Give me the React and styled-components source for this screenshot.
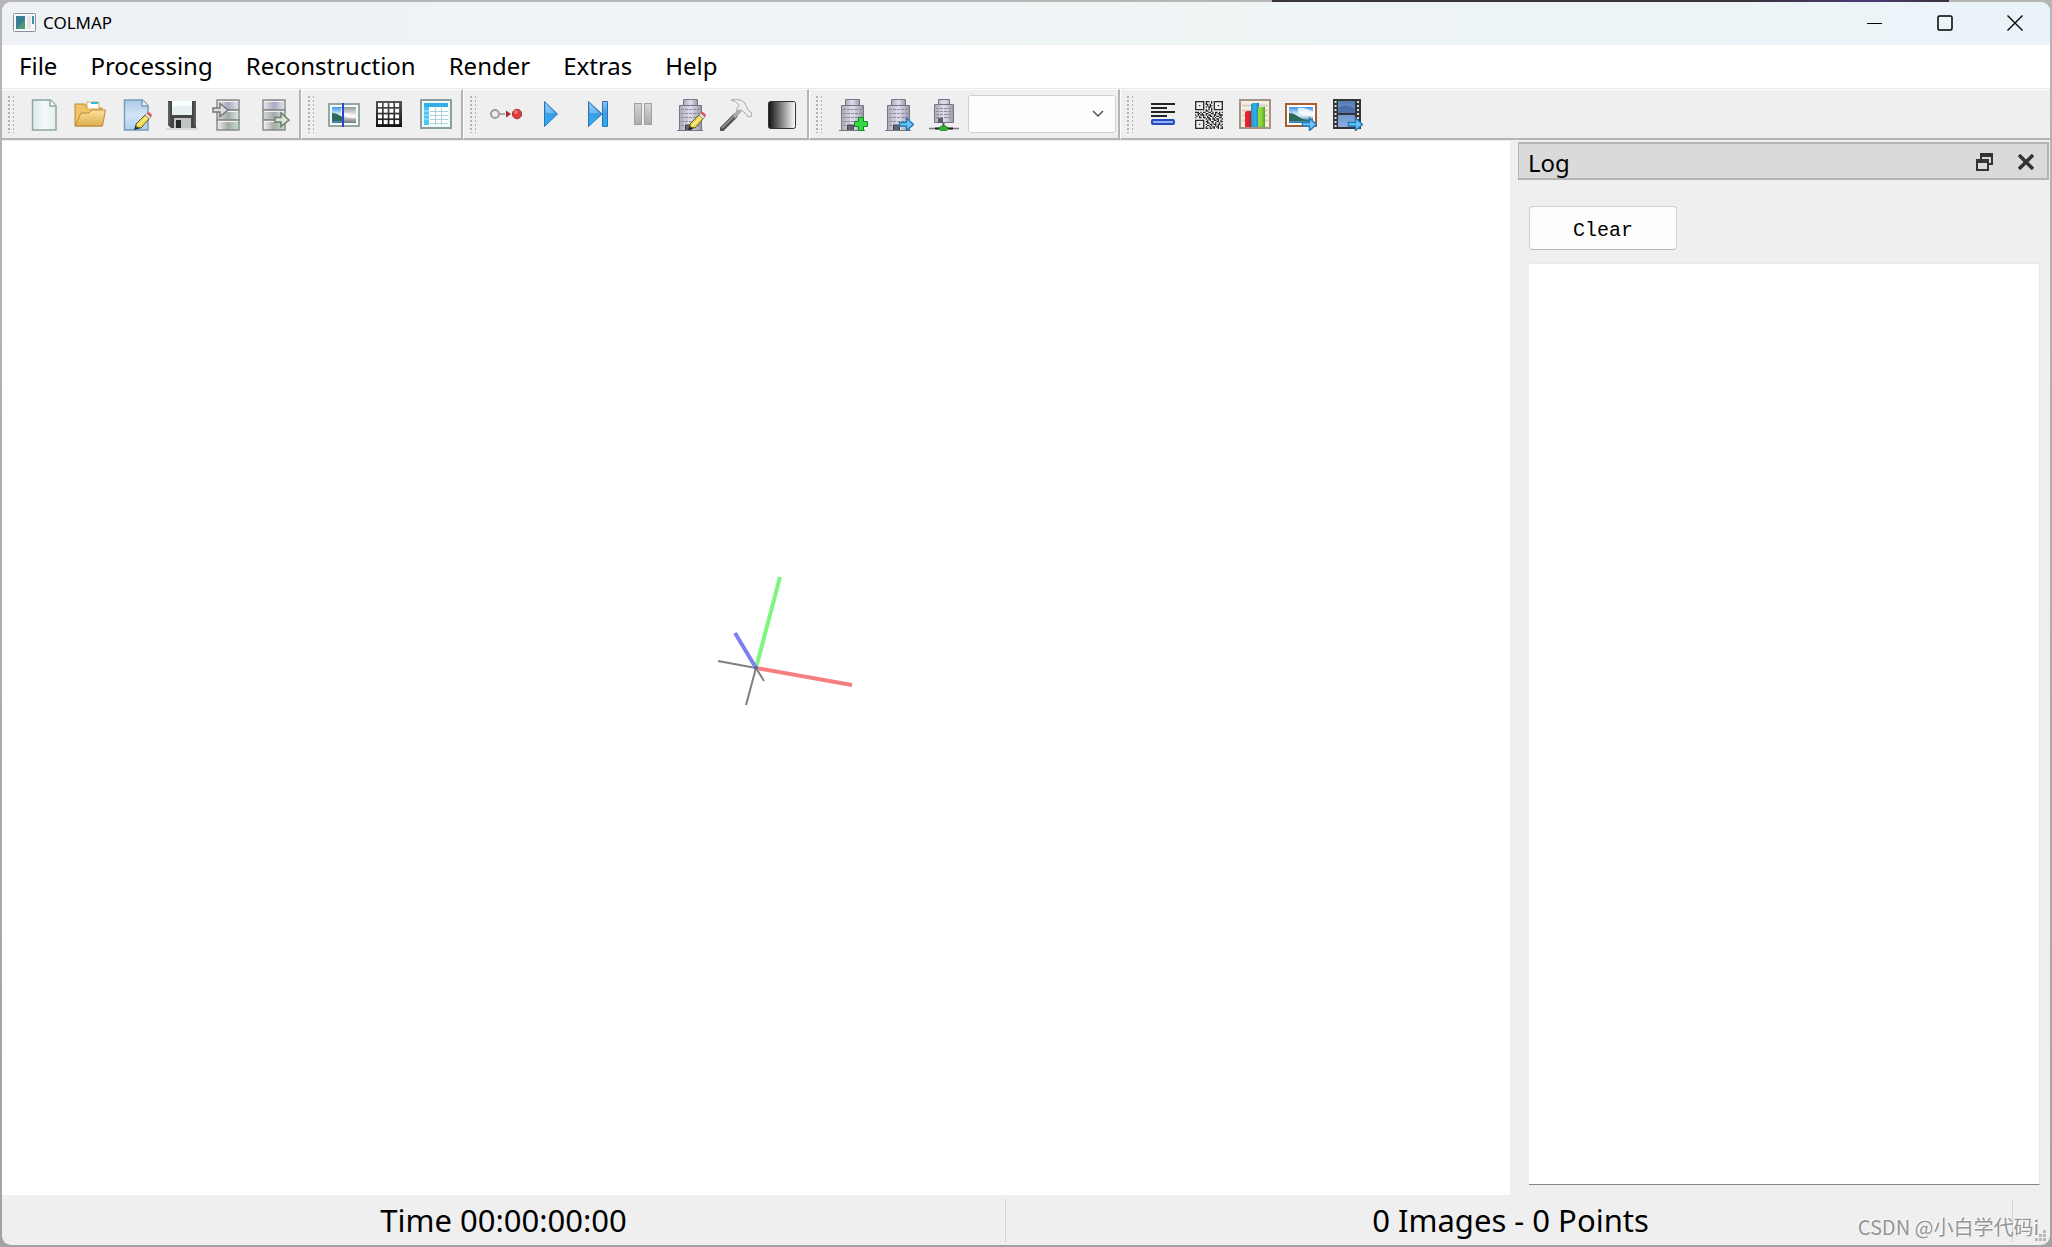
import React from 'react'
import styled, { createGlobalStyle } from 'styled-components'

const line = '#b4b4b4'
const panel = '#efefef'
const uiFont = '"Segoe UI", "Noto Sans", "Open Sans", sans-serif'

const GlobalStyle = createGlobalStyle`
  * {
    box-sizing: border-box;
  }
  body {
    margin: 0;
    background: #c4c4c4;
    color: #000;
    font-family: ${uiFont};
  }
  button, select, textarea {
    font-family: inherit;
    color: inherit;
  }
`

const Desktop = styled.div`
  display: flex;
  flex-direction: column;
  height: 100vh;
  padding: 2px;
  background: linear-gradient(90deg, transparent 62%, #383338 62%, #383338 85%, #4b3a78 91%, #383338 95%, transparent 95%) top / 100% 2px no-repeat,
    linear-gradient(#b6b6b6, #a2a3a3);
`

const Window = styled.div`
  position: relative;
  flex: 1;
  min-height: 0;
  display: flex;
  flex-direction: column;
  border-radius: 9px;
  overflow: hidden;
  background: ${panel};
`

const TitleBar = styled.header`
  display: flex;
  align-items: center;
  height: 43px;
  flex: none;
  padding-left: 11px;
  background: linear-gradient(90deg, #eef2f6, #eff4f5 60%, #eaf4f8);
`

const TitleIcon = styled.svg`
  margin-bottom: 2px;
`

const AppTitle = styled.h1`
  flex: 1;
  margin: 0 0 2px 7px;
  font-size: 17px;
  line-height: 24px;
  font-weight: 400;
`

const CaptionButton = styled.button`
  display: flex;
  align-items: center;
  justify-content: center;
  width: 70px;
  height: 43px;
  padding: 0 0 2px;
  border: 0;
  background: none;
`

const MenuBar = styled.nav`
  display: flex;
  gap: 1px;
  height: 43px;
  flex: none;
  padding-left: 1px;
  background: #fff;
`

const MenuItem = styled.button`
  padding: 0 16px;
  border: 0;
  background: none;
  font-size: 24px;
  line-height: 42px;
  height: 42px;
`

const ToolArea = styled.div`
  display: flex;
  height: 52px;
  flex: none;
  border-top: 1px solid #e8e8e8;
`

const ToolGroup = styled.div`
  display: flex;
  align-items: flex-start;
  flex: ${p => (p.$last ? 1 : 'none')};
  padding: 9px ${p => (p.$last ? 0 : '2px')} 0 6px;
  border-top: 1px solid #fff;
  border-right: ${p => (p.$last ? 0 : '2px')} solid ${line};
  border-bottom: 2px solid ${line};
  & + & {
    border-left: 1px solid #fff;
  }
`

const GripDots = styled.svg`
  flex: none;
  margin: -4px 6px 0 0;
`

const ToolButton = styled.button`
  display: flex;
  justify-content: center;
  width: 46px;
  height: 32px;
  padding: 0;
  border: 0;
  background: none;
`

const Combo = styled.label`
  position: relative;
  margin: -4px 0 0 1px;
  select {
    appearance: none;
    display: block;
    width: 148px;
    height: 38px;
    border: 1px solid #d0d0d0;
    border-radius: 3px;
    background: #fdfdfd;
  }
  svg {
    position: absolute;
    right: 12px;
    top: 15px;
    pointer-events: none;
  }
`

const Workspace = styled.main`
  flex: 1;
  min-height: 0;
  display: flex;
  gap: 8px;
`

const Viewport = styled.div`
  flex: 1;
  display: flex;
  align-items: center;
  justify-content: center;
  margin-top: 1px;
  background: #fff;
`

const Dock = styled.aside`
  flex: 0 0 532px;
  display: flex;
  flex-direction: column;
  padding: 2px 1px 10px 0;
`

const DockTitle = styled.div`
  display: flex;
  align-items: center;
  height: 38px;
  flex: none;
  padding: 2px 5px 0 9px;
  border: 2px solid ${line};
  border-left-width: 1px;
  background: #dadada;
  h2 {
    flex: 1;
    margin: 2px 0 0;
    font-size: 24px;
    line-height: 32px;
    font-weight: 400;
  }
`

const DockButton = styled.button`
  display: flex;
  align-items: center;
  justify-content: center;
  width: 32px;
  height: 32px;
  margin-left: 10px;
  padding: 0;
  border: 0;
  background: none;
`

const DockBody = styled.div`
  flex: 1;
  min-height: 0;
  display: flex;
  flex-direction: column;
  align-items: flex-start;
  gap: 13px;
  padding: 26px 9px 0 11px;
`

const ClearButton = styled.button`
  width: 148px;
  height: 44px;
  padding: 4px 0 0;
  border: 1px solid #d0d0d0;
  border-bottom-color: #b8b8b8;
  border-radius: 4px;
  background: #fdfdfd;
  && {
    font-family: NSimSun, "Liberation Mono", monospace;
  }
  font-size: 20px;
`

const LogText = styled.textarea`
  flex: 1;
  width: 100%;
  resize: none;
  border: 1px solid #e9e9e9;
  border-left: 0;
  border-bottom: 1px solid #868686;
  border-radius: 0;
  background: #fff;
  outline: none;
`

const StatusBar = styled.footer`
  display: flex;
  gap: 3px;
  flex: none;
  height: 50px;
  padding: 4px 0 3px;
`

const StatusCell = styled.div`
  flex: 1;
  border-right: 1px solid #d4d4d4;
  text-align: center;
  font-size: 31px;
  line-height: 43px;
`

const GripCorner = styled.div`
  display: flex;
  align-items: flex-end;
  width: 34px;
  padding-left: 19px;
`

const Watermark = styled.div`
  position: absolute;
  right: 11px;
  bottom: 4px;
  font-family: "Noto Sans CJK SC", sans-serif;
  font-size: 20px;
  line-height: 28px;
  color: #959595;
  text-shadow: -1px -1px 0 #fff;
`

const HiddenDefs = styled.svg`
  position: absolute;
`

const Icon = ({ children }) => (
  <svg width="32" height="32" viewBox="0 0 32 32" aria-hidden="true">{children}</svg>
)

const Gradient = ({ id, from, to, mid, flat }) => (
  <linearGradient id={id} x1="0" y1="0" x2={flat ? 1 : 0} y2={flat ? 0 : 1}>
    <stop offset="0" stopColor={from} />
    {mid && <stop offset=".5" stopColor={mid} />}
    <stop offset="1" stopColor={to} />
  </linearGradient>
)

const Defs = () => (
  <HiddenDefs width="0" height="0" aria-hidden="true">
    <defs>
      <Gradient id="paper" from="#d9e8e7" mid="#f4fafa" to="#e2efed" flat />
      <Gradient id="bluePaper" from="#a9c9e8" mid="#d3e6f7" to="#a8cdf0" />
      <Gradient id="folder" from="#fbe2a0" to="#e0ac4c" />
      <Gradient id="blue" from="#8cc8f4" mid="#3d9de0" to="#22b4fa" />
      <Gradient id="metalTop" from="#e8e8e8" mid="#a9a9c4" to="#e4e4ee" flat />
      <Gradient id="metalMid" from="#d9d9d9" mid="#a2abab" to="#dfe6e6" flat />
      <Gradient id="metalLow" from="#f2f2f2" mid="#a4aca4" to="#c4e0c6" flat />
      <Gradient id="silver" from="#d6d6d6" to="#aaa" />
      <Gradient id="ramp" from="#111" to="#fff" flat />
      <Gradient id="photo" from="#3d94ee" mid="#e8f5fb" to="#2d72a5" />
      <Gradient id="grayPhoto" from="#999" mid="#eee" to="#777" />
      <Gradient id="dark" from="#555" to="#111" />
      <Gradient id="film" from="#557cb8" to="#8daee2" />
      <Gradient id="tower" from="#aaa9b8" mid="#dfdfed" to="#9897a8" flat />
      <Gradient id="barRed" from="#f4222f" mid="#e02331" to="#a3141f" flat />
      <Gradient id="barBlue" from="#2b8fc4" mid="#35b0e6" to="#1a82b5" flat />
      <Gradient id="barGreen" from="#8fe03a" mid="#86d53a" to="#579f23" flat />
    </defs>
  </HiddenDefs>
)

const Pencil = () => (
  <g>
    <path d="M14 31l2-6 5 4z" fill="#222" />
    <path d="M16 25l9-9 4 4-8 9-5-1z" fill="#edd650" stroke="#665b20" />
    <path d="M18 27l9-9" stroke="#fff197" strokeWidth="1.5" />
    <path d="M25 16l2-2 4 4-2 2z" fill="#ddd" stroke="#888" strokeWidth=".7" />
    <path d="M27 14l2-1 3 3-1 2z" fill="#e9434c" />
  </g>
)

const BlueArrow = () => (
  <path d="M17.500 23.500h7v-4.500l7 6.500-7 6v-4.500h-7z" fill="#68c5fa" stroke="#2379b8" strokeWidth="1.400" />
)

const Building = () => (
  <g>
    <path d="M3 31.500h26" stroke="#777" strokeWidth="1" />
    <path d="M9.500.500h14v6h-14z" fill="url(#tower)" stroke="#767583" />
    <path d="M5.500 6.500h22v25h-22z" fill="url(#tower)" stroke="#767583" />
    <path d="M7 10.500h19M7 14.500h19M7 18.500h19M7 22.500h19M7 26.500h19" stroke="#8c8b99" strokeWidth="1.200" strokeDasharray="3 1" />
    <path d="M11.500 31v-5h6v5" fill="#656472" stroke="#444" />
  </g>
)

const Database = () => (
  <g stroke="#8a8c8c" strokeWidth="1.500">
    <rect x="5" y="1" width="22" height="10" fill="url(#metalTop)" />
    <rect x="5" y="11" width="22" height="10" fill="url(#metalMid)" />
    <rect x="5" y="21" width="22" height="10" fill="url(#metalLow)" />
    <path d="M6 2.500h20M6 12.500h20M6 22.500h20" stroke="#f2f2f2" strokeWidth="1" />
  </g>
)

const Picture = () => (
  <g>
    <rect x="4" y="8" width="24" height="16" fill="url(#photo)" />
    <path d="M4 14q5 0 10 4t14 2v2H4z" fill="#2c6957" />
    <path d="M13 9q7-1 15 4v4q-8 0-15-3z" fill="#fff" opacity=".8" />
  </g>
)

const qrRows = [
  '#######.###.#.#######',
  '#.....#.#...#.#.....#',
  '#.....#.##.#..#.....#',
  '#..#..#..#.##.#..#..#',
  '#.....#.#.##..#.....#',
  '#.....#...#.#.#.....#',
  '#######.#.#.#.#######',
  '........##..#........',
  '###.#.##..##.#.##.#.#',
  '..##.#..##..##.#.##..',
  '#.#.###.#.##..##..###',
  '.#.#..#..#.##.#.##.#.',
  '#..##.##.##..#.#..##.',
  '........#.##.##.##..#',
  '#######..#.#..##.#.#.',
  '#.....#.##..##..##.##',
  '#.....#..##..#.#..#..',
  '#..#..#.#..##.##.##.#',
  '#.....#..##.#..#.#.#.',
  '#.....#.#..#.##.##..#',
  '#######.##.##.#..#.##',
]

const qrPath = qrRows
  .map((row, y) => [...row].map((c, x) => (c === '#' ? `M${x} ${y}h1v1h-1z` : '')).join(''))
  .join('')

const icons = {
  newProject: (
    <Icon>
      <path d="M4.500 1h18l5.500 5.500V31H4.500z" fill="url(#paper)" stroke="#90a5a5" strokeWidth="1.500" />
      <path d="M22 1v6h6" fill="#f9fdfd" stroke="#90a5a5" strokeWidth="1.500" />
    </Icon>
  ),
  openProject: (
    <Icon>
      <path d="M1 27V5h10l2 4h15v18z" fill="#efc568" stroke="#b98935" />
      <path d="M13 5V3h12v7H13z" fill="#fff" stroke="#d8a956" />
      <path d="M17 4h7" stroke="#2bb9f1" strokeWidth="2" />
      <path d="M1 27l6-13h8l3-3h13.500l-3 16z" fill="url(#folder)" stroke="#bd8d38" />
    </Icon>
  ),
  editProject: (
    <Icon>
      <path d="M4.500 1h18l5.500 5.500V31H4.500z" fill="url(#bluePaper)" stroke="#7b9cb9" strokeWidth="1.500" />
      <path d="M22 1v6h6" fill="#edf7ff" stroke="#7b9cb9" strokeWidth="1.500" />
      <Pencil />
    </Icon>
  ),
  save: (
    <Icon>
      <path d="M0 29h32v2H0z" fill="#d8d8d8" />
      <path d="M2 2h28v27H5l-3-3z" fill="#454545" />
      <path d="M6 2h20v14H6z" fill="#e5f1f1" />
      <path d="M6 2h20v5H6z" fill="#f9ffff" />
      <path d="M8 19h17v10H8z" fill="#bfc3c4" />
      <path d="M10 21h5v8h-5z" fill="#292929" />
      <path d="M3 3v22M29 3v24" stroke="#777" />
    </Icon>
  ),
  importModel: (
    <Icon>
      <Database />
      <path d="M1 9h7V4.500l8 6.500-8 6.500V13H1z" fill="#d9dddd" stroke="#757878" strokeWidth="1.500" />
    </Icon>
  ),
  exportModel: (
    <Icon>
      <Database />
      <path d="M17 18.500h6V14l8 7-8 6.500V23h-6z" fill="#d5e9d4" stroke="#727a72" strokeWidth="1.500" />
    </Icon>
  ),
  featureExtraction: (
    <Icon>
      <rect x="1" y="5" width="30" height="22" fill="#f5fcfa" stroke="#94a6a4" strokeWidth="2" />
      <Picture />
      <path d="M16 8h12v16H16z" fill="url(#grayPhoto)" />
      <path d="M16 14q6 0 12 3v2q-7 1-12-2z" fill="#fff" opacity=".8" />
      <path d="M15 4v24" stroke="#2845cd" strokeWidth="2" />
    </Icon>
  ),
  featureMatching: (
    <Icon>
      <path d="M2 2h26v26H2z" fill="url(#dark)" />
      {[4, 9.700, 15.400, 21.100].map(y =>
        [4, 9.700, 15.400, 21.100].map(x => <rect key={`${x}-${y}`} x={x} y={y} width="4" height="4" fill="#fff" />)
      )}
    </Icon>
  ),
  databaseManagement: (
    <Icon>
      <rect x="1" y="1" width="30" height="28" fill="#eff9f6" stroke="#8ba09c" strokeWidth="2" />
      <path d="M4 4h24v22H4z" fill="#fff" />
      <path d="M4 4h24v4H4z" fill="#31aee8" />
      <path d="M4 8h5v18H4z" fill="#49c7f7" />
      <path d="M10 12.500h18M10 16.500h18M10 20.500h18M10 24.500h18M15.500 9v17M21.500 9v17" stroke="#a9d3d8" />
      <path d="M4 12h5M4 16h5M4 20h5" stroke="#a8edff" />
    </Icon>
  ),
  automatic: (
    <Icon>
      <path d="M10 15h5" stroke="#999" strokeWidth="1.500" />
      <circle cx="5" cy="15" r="4" fill="#eee" stroke="#9d9d9d" strokeWidth="2" />
      <path d="M16 11.500l5 3.500-5 3.500z" fill="#a92a2a" />
      <circle cx="27" cy="15" r="4.700" fill="#dd3e3e" stroke="#a92d2d" />
      <circle cx="26" cy="13" r="2" fill="#f07575" />
    </Icon>
  ),
  start: (
    <Icon>
      <path d="M8.500 2.500L21.500 15l-13 12.500z" fill="url(#blue)" stroke="#2d72b6" />
      <path d="M10 5v9l8 0z" fill="#a2d8fa" opacity=".5" />
    </Icon>
  ),
  step: (
    <Icon>
      <path d="M6.500 2.500L20 15 6.500 27.500z" fill="url(#blue)" stroke="#2d72b6" />
      <path d="M8 5v9h8z" fill="#a2d8fa" opacity=".5" />
      <path d="M20.500 2.500h5v25h-5z" fill="url(#blue)" stroke="#2d72b6" />
    </Icon>
  ),
  pause: (
    <Icon>
      <rect x="6.500" y="4.500" width="7" height="21" fill="url(#silver)" stroke="#a0a0a0" />
      <rect x="16.500" y="4.500" width="7" height="21" fill="url(#silver)" stroke="#a0a0a0" />
    </Icon>
  ),
  options: <Icon><Building /><Pencil /></Icon>,
  bundleAdjustment: (
    <Icon>
      <path d="M2 30L15 17" stroke="#555" strokeWidth="5" strokeLinecap="round" />
      <path d="M2 29L14 17" stroke="#999" strokeWidth="1.500" />
      <path d="M14 18l8-9" stroke="#aaa" strokeWidth="4" />
      <path d="M11 1q9-2 14 3l2 5 2 3 3 2-1 4-4-1-2-3-4-3-5 1 3-6q-3-4-8-5z" fill="#ededed" stroke="#aaa" />
    </Icon>
  ),
  dense: (
    <Icon>
      <rect x="2.500" y="2.500" width="27" height="27" rx="2" fill="url(#ramp)" stroke="#333" />
    </Icon>
  ),
  renderAdd: (
    <Icon>
      <Building />
      <path d="M22.500 18.500h5v4h4v5h-4v4h-5v-4h-4v-5h4z" fill="#35d943" stroke="#168524" />
    </Icon>
  ),
  renderExport: <Icon><Building /><BlueArrow /></Icon>,
  network: (
    <Icon>
      <path d="M1 29.500h30" stroke="#777" strokeWidth="1.500" />
      <path d="M7 29.500h18" stroke="#222" strokeWidth="2" />
      <path d="M15.500 24v4" stroke="#555" strokeWidth="2" />
      <path d="M10.500.500h11v5h-11zM6.500 5.500h19v18h-19z" fill="url(#tower)" stroke="#767583" />
      <path d="M8 9.500h16M8 12.500h16M8 15.500h16M8 18.500h16" stroke="#8c8b99" strokeDasharray="3 1" />
      <path d="M10 19h5v5h-5z" fill="#5d5c69" />
      <path d="M13 27h5l2 2.500-2 2.500h-5l-2-2.500z" fill="#27b831" stroke="#247029" strokeWidth=".7" />
    </Icon>
  ),
  log: (
    <Icon>
      <path d="M4 5h24M4 9h16M4 13h24M4 17h16" stroke="#242424" strokeWidth="2" />
      <rect x="5" y="21" width="22" height="4" rx="1" fill="#91b3f2" stroke="#264bc5" strokeWidth="2" />
    </Icon>
  ),
  matchMatrix: (
    <Icon>
      <path d={qrPath} transform="translate(2 2) scale(1.3333)" fill="#2b2b2b" />
    </Icon>
  ),
  statistics: (
    <Icon>
      <rect x="1" y="1" width="30" height="28" fill="#f4eee3" stroke="#a59384" strokeWidth="2" />
      <path d="M3 6.500h26M3 11.500h26M3 16.500h26M3 21.500h26" stroke="#d9cfc1" strokeWidth="2" />
      <path d="M6 13l2-1h5v16H6z" fill="url(#barRed)" />
      <path d="M12 5l2-1h6v24h-8z" fill="url(#barBlue)" />
      <path d="M19 9l2-1h5v20h-7z" fill="url(#barGreen)" />
    </Icon>
  ),
  grabImage: (
    <Icon>
      <rect x="1" y="5" width="30" height="22" fill="#fff" stroke="#a75d32" strokeWidth="2" />
      <Picture />
      <BlueArrow />
    </Icon>
  ),
  grabMovie: (
    <Icon>
      <path d="M2 0h28v30H2z" fill="#353535" />
      <path d="M7 2h17v12H7zM7 16h17v12H7z" fill="url(#film)" />
      <path d="M7 9q8-5 17 1v4H7z" fill="#324f8c" opacity=".5" />
      <path d="M4.500 2v27M27 2v27" stroke="#ddd" strokeWidth="2" strokeDasharray="2 2" />
      <BlueArrow />
    </Icon>
  ),
}

const toolGroups = [
  [
    ['New project', 'newProject'],
    ['Open project', 'openProject'],
    ['Edit project', 'editProject'],
    ['Save project', 'save'],
    ['Import model', 'importModel'],
    ['Export model', 'exportModel'],
  ],
  [
    ['Feature extraction', 'featureExtraction'],
    ['Feature matching', 'featureMatching'],
    ['Database management', 'databaseManagement'],
  ],
  [
    ['Automatic reconstruction', 'automatic'],
    ['Start reconstruction', 'start'],
    ['Reconstruct next image', 'step'],
    ['Pause reconstruction', 'pause'],
    ['Reconstruction options', 'options'],
    ['Bundle adjustment', 'bundleAdjustment'],
    ['Dense reconstruction', 'dense'],
  ],
  [
    ['Render', 'renderAdd'],
    ['Reset view', 'renderExport'],
    ['Render options', 'network'],
  ],
  [
    ['Show log', 'log'],
    ['Match matrix', 'matchMatrix'],
    ['Model statistics', 'statistics'],
    ['Grab image', 'grabImage'],
    ['Grab movie', 'grabMovie'],
  ],
]

const menus = ['File', 'Processing', 'Reconstruction', 'Render', 'Extras', 'Help']

const ToolGrip = () => (
  <GripDots width="7" height="38" aria-hidden="true">
    <path d="M1 1v37" stroke="#b2b2b2" strokeWidth="2" strokeDasharray="2 2" />
    <path d="M5.500 1v37" stroke="#b2b2b2" strokeDasharray="2 2" />
  </GripDots>
)

const Axes = () => (
  <svg width="200" height="200" viewBox="-100 -100 200 200" role="img" aria-label="Coordinate axes">
    <path d="M0 0L-38 -7M0 0L-10 37M0 0L8 13" stroke="#808080" strokeWidth="2" />
    <path d="M0 0L96 17" stroke="#f57f7f" strokeWidth="4" />
    <path d="M0 0L24 -91" stroke="#7ff57f" strokeWidth="4" />
    <path d="M0 0L-21 -35" stroke="#8080f5" strokeWidth="4" />
    <circle r="2" fill="#5662a0" />
  </svg>
)

const App = () => {
  return (
    <Desktop>
      <GlobalStyle />
      <Defs />
      <Window>
        <TitleBar>
          <TitleIcon width="23" height="19" viewBox="0 0 23 19" aria-hidden="true">
            <rect x=".5" y=".5" width="22" height="18" rx="1" fill="#f8f8f8" stroke="#8d939b" />
            <path d="M3 3h9v13H3z" fill="#397f91" />
            <path d="M3 16l9-9v9z" fill="#4a9c77" />
            <path d="M14 3h4v13h-4z" fill="#e3e5e7" />
            <path d="M19 3h2v8h-2z" fill="#468eb0" />
          </TitleIcon>
          <AppTitle>COLMAP</AppTitle>
          <CaptionButton aria-label="Minimize">
            <svg width="16" height="16"><path d="M0 8.500h15" stroke="#000" /></svg>
          </CaptionButton>
          <CaptionButton aria-label="Maximize">
            <svg width="16" height="16"><rect x="1" y="1" width="14" height="14" rx="1.500" fill="none" stroke="#000" strokeWidth="1.500" /></svg>
          </CaptionButton>
          <CaptionButton aria-label="Close">
            <svg width="16" height="16"><path d="M.5 .5l15 15M15.500 .5l-15 15" stroke="#000" strokeWidth="1.400" /></svg>
          </CaptionButton>
        </TitleBar>
        <MenuBar>
          {menus.map(name => <MenuItem key={name}>{name}</MenuItem>)}
        </MenuBar>
        <ToolArea>
          {toolGroups.map((tools, i) => (
            <ToolGroup key={i} $last={i === toolGroups.length - 1}>
              <ToolGrip />
              {tools.map(([label, icon]) => (
                <ToolButton key={icon} aria-label={label}>{icons[icon]}</ToolButton>
              ))}
              {i === 3 && (
                <Combo>
                  <select aria-label="Model" />
                  <svg width="12" height="8"><path d="M1 1l5 5 5-5" fill="none" stroke="#555" strokeWidth="1.500" /></svg>
                </Combo>
              )}
            </ToolGroup>
          ))}
        </ToolArea>
        <Workspace>
          <Viewport><Axes /></Viewport>
          <Dock>
            <DockTitle>
              <h2 id="log-title">Log</h2>
              <DockButton aria-label="Float">
                <svg width="17" height="18">
                  <path d="M5 7V1h11v10h-4" fill="none" stroke="#333" strokeWidth="2" />
                  <path d="M4 0h13v4H4zM0 6h13v4H0z" fill="#333" />
                  <path d="M1 7h11v10H1z" fill="none" stroke="#333" strokeWidth="2" />
                </svg>
              </DockButton>
              <DockButton aria-label="Close log">
                <svg width="16" height="16"><path d="M1 1l14 14M15 1L1 15" stroke="#333" strokeWidth="3.500" /></svg>
              </DockButton>
            </DockTitle>
            <DockBody>
              <ClearButton>Clear</ClearButton>
              <LogText readOnly aria-labelledby="log-title" />
            </DockBody>
          </Dock>
        </Workspace>
        <StatusBar>
          <StatusCell>Time 00:00:00:00</StatusCell>
          <StatusCell>0 Images - 0 Points</StatusCell>
          <GripCorner>
            <svg width="12" height="12" fill="#b8b8b8" aria-hidden="true">
              <path d="M8 0h3v3H8zM4 4h3v3H4zM8 4h3v3H8zM0 8h3v3H0zM4 8h3v3H4zM8 8h3v3H8z" />
            </svg>
          </GripCorner>
        </StatusBar>
        <Watermark>CSDN @小白学代码i</Watermark>
      </Window>
    </Desktop>
  )
}

export default App
